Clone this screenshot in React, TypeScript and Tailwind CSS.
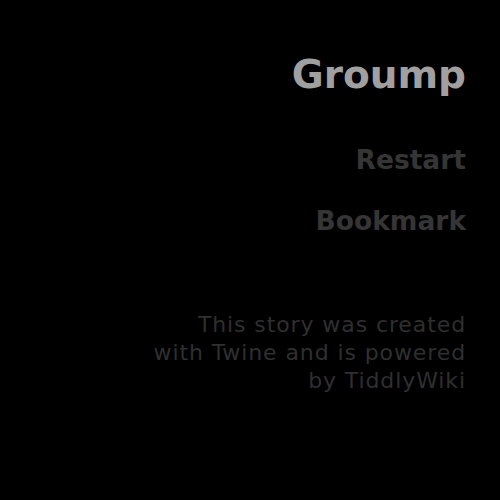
export default function App() {
  return (
    <div
      className="flex h-[500px] w-[500px] flex-col items-end bg-black pr-[34px] pt-[52px] text-right"
      style={{ fontFamily: '"DejaVu Sans", Verdana, sans-serif' }}
    >
      <h1 className="m-0 text-[39px] font-bold leading-[46px] text-[#a0a0a0]">
        Groump
      </h1>
      <nav className="mt-[47px] flex flex-col items-end gap-[31px]">
        <a className="text-[26.5px] font-bold leading-[30px] text-[#353535]">
          Restart
        </a>
        <a className="text-[26.5px] font-bold leading-[30px] text-[#353535]">
          Bookmark
        </a>
      </nav>
      <p className="m-0 mt-[75px] whitespace-nowrap text-[22px] leading-[28px] tracking-[0.9px] text-[#2f2f2f]">
        This story was created
        <br />
        with Twine and is powered
        <br />
        by TiddlyWiki
      </p>
    </div>
  );
}
